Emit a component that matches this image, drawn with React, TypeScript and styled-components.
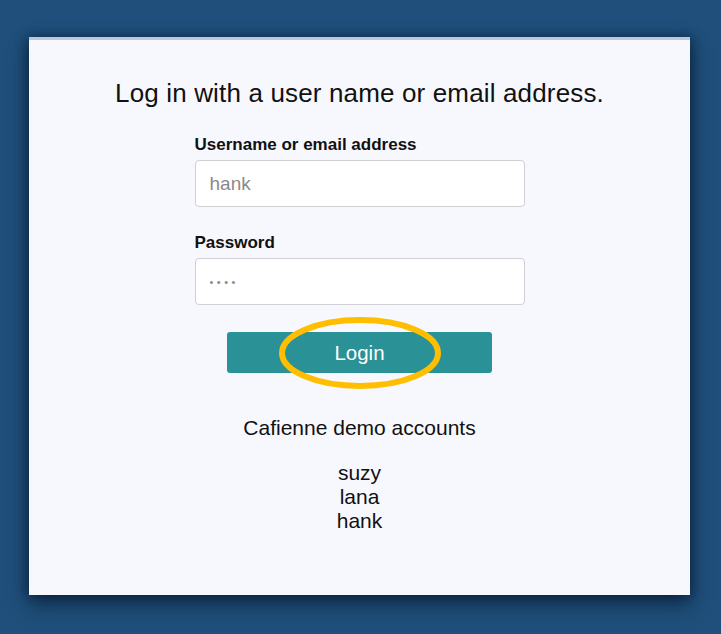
import React from "react";
import styled, { createGlobalStyle } from "styled-components";

const Global = createGlobalStyle`
  html, body { margin: 0; padding: 0; }
  body {
    background: #1f4f7a;
    font-family: "Liberation Sans", Arial, sans-serif;
    width: 721px;
    height: 634px;
    overflow: hidden;
  }
`;

const Page = styled.div`
  width: 721px;
  height: 634px;
  box-sizing: border-box;
  padding: 37px 31px 0 29px;
`;

const Panel = styled.div`
  width: 661px;
  height: 558px;
  box-sizing: border-box;
  background: #f7f8fd;
  border-top: 3px solid #b9c8da;
  box-shadow: 0 10px 18px rgba(5, 20, 40, 0.55), 4px 0 10px rgba(5, 20, 40, 0.3), -4px 0 10px rgba(5, 20, 40, 0.3);
  display: flex;
  flex-direction: column;
  align-items: center;
  padding-top: 38px;
`;

const Title = styled.h1`
  margin: 0;
  font-size: 26px;
  line-height: 30px;
  font-weight: normal;
  color: #111;
  letter-spacing: 0.15px;
`;

const Form = styled.form`
  width: 330px;
  display: flex;
  flex-direction: column;
  margin-top: 28px;
`;

const Field = styled.div<{ $gap?: number }>`
  display: flex;
  flex-direction: column;
  gap: 6px;
  margin-top: ${(p) => p.$gap ?? 0}px;
`;

const Label = styled.label`
  font-size: 17px;
  line-height: 18px;
  font-weight: bold;
  color: #111;
`;

const Input = styled.input<{ $secret?: boolean }>`
  box-sizing: border-box;
  width: 330px;
  height: 47px;
  border: 1px solid #cfcfd4;
  border-radius: 4px;
  background: #fff;
  padding: 0 14px;
  font-family: "Liberation Sans", Arial, sans-serif;
  font-size: ${(p) => (p.$secret ? "11px" : "19px")};
  letter-spacing: ${(p) => (p.$secret ? "3.5px" : "0")};
  color: ${(p) => (p.$secret ? "#888" : "#8a8a8a")};
  outline: none;
`;

const ButtonWrap = styled.div`
  position: relative;
  align-self: center;
  margin-top: 27px;
`;

const LoginButton = styled.button`
  width: 265px;
  height: 41px;
  border: none;
  border-radius: 3px;
  background: #2a9196;
  color: #fff;
  font-family: "Liberation Sans", Arial, sans-serif;
  font-size: 20.5px;
  display: block;
`;

const Highlight = styled.svg`
  position: absolute;
  left: 50px;
  top: -17px;
  width: 166px;
  height: 76px;
  pointer-events: none;
`;

const Demo = styled.div`
  margin-top: 43px;
  display: flex;
  flex-direction: column;
  align-items: center;
  color: #111;
`;

const DemoTitle = styled.div`
  font-size: 21px;
  line-height: 24px;
`;

const Accounts = styled.div`
  margin-top: 21px;
  display: flex;
  flex-direction: column;
  align-items: center;
  font-size: 21px;
  line-height: 24px;
`;

export default function App() {
  return (
    <>
      <Global />
      <Page>
        <Panel>
          <Title>Log in with a user name or email address.</Title>
          <Form onSubmit={(e) => e.preventDefault()}>
            <Field>
              <Label>Username or email address</Label>
              <Input defaultValue="hank" />
            </Field>
            <Field $gap={27}>
              <Label>Password</Label>
              <Input $secret type="password" defaultValue="hank" />
            </Field>
            <ButtonWrap>
              <LoginButton type="submit">Login</LoginButton>
              <Highlight viewBox="0 0 166 76">
                <ellipse cx="83" cy="38" rx="78" ry="33" fill="none" stroke="#ffbf00" strokeWidth="6" />
              </Highlight>
            </ButtonWrap>
          </Form>
          <Demo>
            <DemoTitle>Cafienne demo accounts</DemoTitle>
            <Accounts>
              <span>suzy</span>
              <span>lana</span>
              <span>hank</span>
            </Accounts>
          </Demo>
        </Panel>
      </Page>
    </>
  );
}
